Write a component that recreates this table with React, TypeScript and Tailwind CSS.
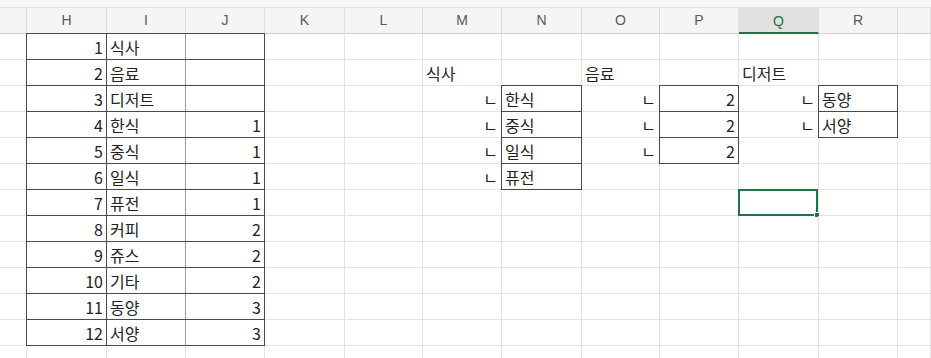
import type { ReactNode } from "react";

// Sheet columns shown on screen, G is only partly visible on the left and S on the right
const columns = ["G", "H", "I", "J", "K", "L", "M", "N", "O", "P", "Q", "R", "S"];
const rowNumbers = Array.from({ length: 13 }, (_, i) => i + 1);

const categories = ["식사", "음료", "디저트", "한식", "중식", "일식", "퓨전", "커피", "쥬스", "기타", "동양", "서양"];
const parents = [null, null, null, 1, 1, 1, 1, 2, 2, 2, 3, 3];

type Cell = {
    value?: ReactNode;
    align?: "left" | "right";
    boxed?: boolean;
};

function buildSheet() {
    const sheet: Record<string, Cell> = {};
    categories.forEach((name, i) => {
        const r = i + 1;
        sheet[`H${r}`] = { value: r, align: "right", boxed: true };
        sheet[`I${r}`] = { value: name, boxed: true };
        sheet[`J${r}`] = { value: parents[i] ?? undefined, align: "right", boxed: true };
    });

    sheet["M2"] = { value: "식사" };
    sheet["O2"] = { value: "음료" };
    sheet["Q2"] = { value: "디저트" };

    ["한식", "중식", "일식", "퓨전"].forEach((name, i) => {
        sheet[`M${i + 3}`] = { value: "ㄴ", align: "right" };
        sheet[`N${i + 3}`] = { value: name, boxed: true };
    });
    [0, 1, 2].forEach((i) => {
        sheet[`O${i + 3}`] = { value: "ㄴ", align: "right" };
        sheet[`P${i + 3}`] = { value: 2, align: "right", boxed: true };
    });
    ["동양", "서양"].forEach((name, i) => {
        sheet[`Q${i + 3}`] = { value: "ㄴ", align: "right" };
        sheet[`R${i + 3}`] = { value: name, boxed: true };
    });
    return sheet;
}

const sheet = buildSheet();
const activeCell = "Q7";

function GridCell({ col, row }: { col: string; row: number }) {
    const key = `${col}${row}`;
    const cell = sheet[key];
    const active = key === activeCell;

    // boxed cells draw right/bottom as their own border, left/top via a shadow on the neighbour's line
    let frame = "border-r border-b border-[#e3e3e3]";
    if (cell?.boxed) {
        if (col === "I") frame = "border-r border-b border-r-[#9a9a9a] border-b-[#4a4a4a] shadow-[-1px_0_0_0_#4a4a4a,0_-1px_0_0_#4a4a4a,-1px_-1px_0_0_#4a4a4a]";
        else if (col === "J") frame = "border-r border-b border-[#4a4a4a] shadow-[0_-1px_0_0_#4a4a4a]";
        else frame = "border-r border-b border-[#4a4a4a] shadow-[-1px_0_0_0_#4a4a4a,0_-1px_0_0_#4a4a4a,-1px_-1px_0_0_#4a4a4a]";
    }

    return (
        <div
            className={`relative flex h-[26px] items-center overflow-visible whitespace-nowrap text-[16px] text-[#222222] ${frame} ${
                cell?.align === "right" ? "justify-end pr-[3px]" : "justify-start pl-[3px]"
            }`}
        >
            {cell?.value !== undefined && <span className="leading-none">{cell.value}</span>}
            {active && (
                <div className="pointer-events-none absolute -left-px -top-px bottom-[-1px] right-0 border-2 border-[#217346]">
                    <div className="absolute -bottom-[4px] -right-[4px] h-[6px] w-[6px] border border-white bg-[#217346]" />
                </div>
            )}
        </div>
    );
}

export default function App() {
    return (
        <div
            className="h-[358px] w-[931px] overflow-hidden bg-white"
            style={{ fontFamily: '"Noto Sans CJK KR", "Noto Sans", sans-serif' }}
        >
            {/* strip above the column headers */}
            <div className="h-[8px] border-b border-[#e4e4e4] bg-[#f6f6f6]" />

            <div className="grid grid-cols-[27px_80px_79px_79px_80px_78px_79px_80px_78px_79px_80px_79px_33px]">
                {/* column headers */}
                {columns.map((col) => {
                    const active = col === "Q";
                    return (
                        <div
                            key={col}
                            className={`flex h-[26px] items-center justify-center border-r border-r-[#dedede] text-[14px] ${
                                active
                                    ? "border-b-2 border-b-[#217346] bg-[#e1e1e1] pt-[2px] text-[#217346]"
                                    : "border-b border-b-[#d2d2d2] bg-[#f5f5f5] text-[#5a5a5a]"
                            }`}
                            style={{ fontFamily: '"Liberation Sans", Arial, sans-serif' }}
                        >
                            {col === "G" || col === "S" ? "" : col}
                        </div>
                    );
                })}

                {/* sheet body */}
                {rowNumbers.map((row) => columns.map((col) => <GridCell key={`${col}${row}`} col={col} row={row} />))}
            </div>
        </div>
    );
}
